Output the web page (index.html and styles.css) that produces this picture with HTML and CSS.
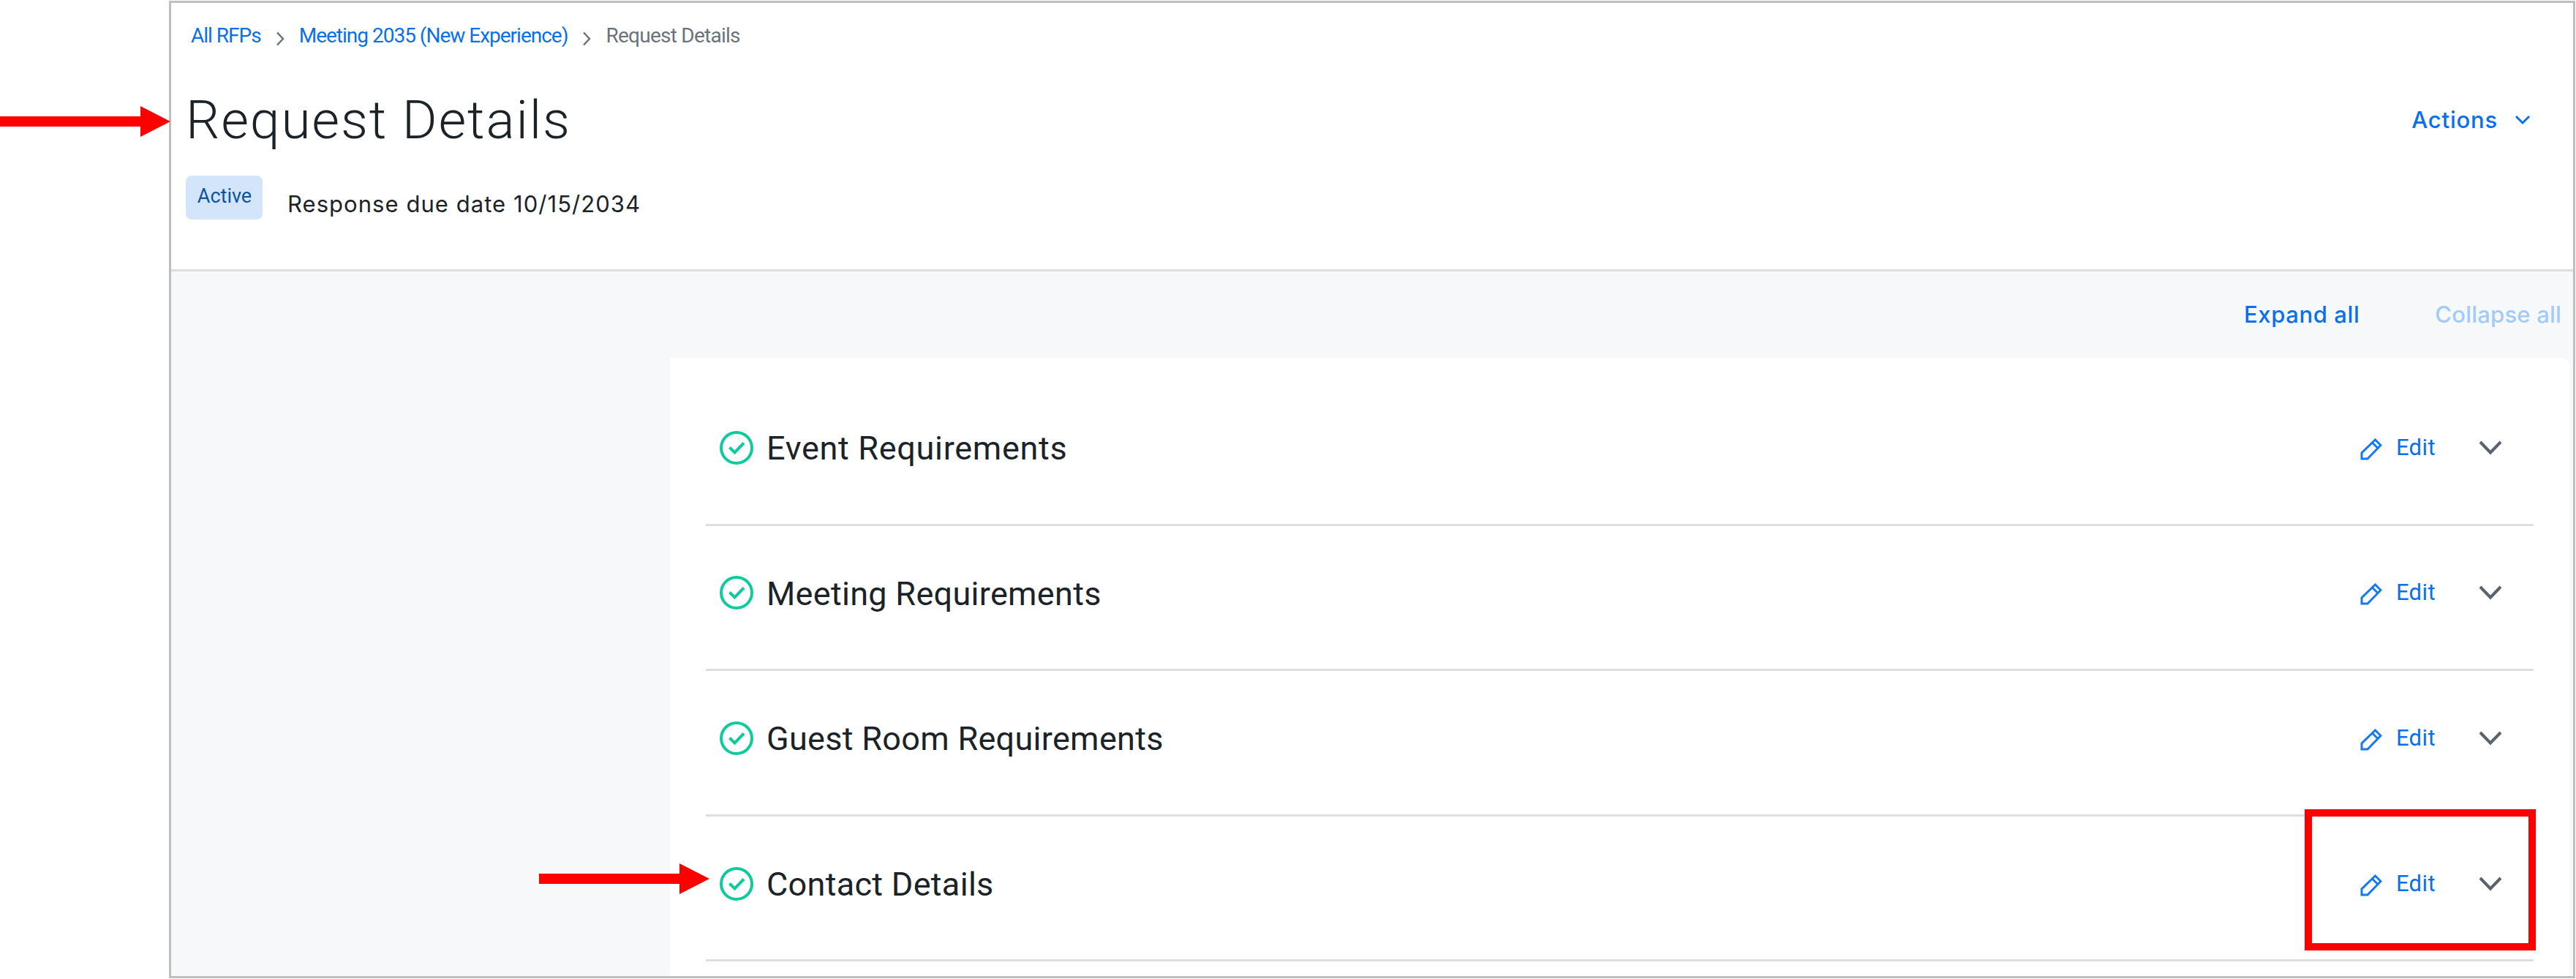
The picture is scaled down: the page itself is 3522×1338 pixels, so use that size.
FILE: index.html
```
<!DOCTYPE html>
<html lang="en">
<head>
<meta charset="utf-8">
    <title>Request Details</title>
    <link rel="stylesheet" href="styles.css">
</head>
<body>
    <svg class="arrow arrow-title" viewBox="0 0 233 42"><path d="M0 14H192V0L233 21L192 42V28H0Z"/></svg>

    <div class="frame">
        <header class="header">
            <nav class="breadcrumb">
                <a href="#">All RFPs</a>
                <svg class="sep" viewBox="0 0 12 20"><path d="M2 1.5L10 10L2 18.5"/></svg>
                <a href="#">Meeting 2035 (New Experience)</a>
                <svg class="sep" viewBox="0 0 12 20"><path d="M2 1.5L10 10L2 18.5"/></svg>
                <span class="current">Request Details</span>
            </nav>
            <div class="title-row">
                <h1>Request Details</h1>
                <button class="link actions">Actions
                    <svg class="caret" viewBox="0 0 22 14"><path d="M2 2L11 11L20 2"/></svg>
                </button>
            </div>
            <div class="status">
                <span class="badge">Active</span>
                <span class="due">Response due date 10/15/2034</span>
            </div>
        </header>

        <main class="content">
            <div class="toolbar">
                <button class="link">Expand all</button>
                <button class="link collapse" disabled>Collapse all</button>
            </div>
            <ul class="card">
                <li class="row">
                    <svg class="check" viewBox="0 0 46 46"><circle cx="23" cy="23" r="21"/><path d="M13.5 22.5L20.5 29.5L33 16.5"/></svg>
                    <h2 class="event">Event Requirements</h2>
                    <svg class="pencil" viewBox="0 0 30 30"><path d="M2 28V20L20.5 2L28 9.5L10 28ZM16.5 6L24 13.5"/></svg>
                    <a href="#" class="edit">Edit</a>
                    <svg class="chevron" viewBox="0 0 32 20"><path d="M2 2L16 16.5L30 2"/></svg>
                </li>
                <li class="row">
                    <svg class="check" viewBox="0 0 46 46"><circle cx="23" cy="23" r="21"/><path d="M13.5 22.5L20.5 29.5L33 16.5"/></svg>
                    <h2>Meeting Requirements</h2>
                    <svg class="pencil" viewBox="0 0 30 30"><path d="M2 28V20L20.5 2L28 9.5L10 28ZM16.5 6L24 13.5"/></svg>
                    <a href="#" class="edit">Edit</a>
                    <svg class="chevron" viewBox="0 0 32 20"><path d="M2 2L16 16.5L30 2"/></svg>
                </li>
                <li class="row">
                    <svg class="check" viewBox="0 0 46 46"><circle cx="23" cy="23" r="21"/><path d="M13.5 22.5L20.5 29.5L33 16.5"/></svg>
                    <h2>Guest Room Requirements</h2>
                    <svg class="pencil" viewBox="0 0 30 30"><path d="M2 28V20L20.5 2L28 9.5L10 28ZM16.5 6L24 13.5"/></svg>
                    <a href="#" class="edit">Edit</a>
                    <svg class="chevron" viewBox="0 0 32 20"><path d="M2 2L16 16.5L30 2"/></svg>
                </li>
                <li class="row">
                    <svg class="check" viewBox="0 0 46 46"><circle cx="23" cy="23" r="21"/><path d="M13.5 22.5L20.5 29.5L33 16.5"/></svg>
                    <h2>Contact Details</h2>
                    <svg class="pencil" viewBox="0 0 30 30"><path d="M2 28V20L20.5 2L28 9.5L10 28ZM16.5 6L24 13.5"/></svg>
                    <a href="#" class="edit">Edit</a>
                    <svg class="chevron" viewBox="0 0 32 20"><path d="M2 2L16 16.5L30 2"/></svg>
                </li>
            </ul>
        </main>
    </div>

    <!-- callouts -->
    <svg class="arrow arrow-contact" viewBox="0 0 233 42"><path d="M0 14H192V0L233 21L192 42V28H0Z"/></svg>
    <div class="highlight"></div>
</body>
</html>
```
FILE: styles.css
```
* {
    box-sizing: border-box;
}
body {
    margin: 0;
    position: relative;
    width: 3522px;
    height: 1338px;
    overflow: hidden;
    background: #fff;
    color: #1b2329;
    font-family: Roboto, "Liberation Sans", sans-serif;
}
svg {
    display: block;
    flex: none;
    fill: none;
}
a {
    color: #0a6fec;
    text-decoration: none;
}
h1, h2 {
    margin: 0;
    white-space: nowrap;
}
.frame {
    width: 3290px;
    height: 1336px;
    margin: 1px 0 0 231px;
    border: 3px solid #bfbfbf;
    overflow: hidden;
    display: flex;
    flex-direction: column;
}

/* header */
.header {
    height: 367px;
    flex: none;
    padding: 27px 58px 0 20px;
    border-bottom: 3px solid #dcdfe2;
}
.breadcrumb {
    display: flex;
    align-items: center;
    height: 36px;
    padding-left: 7px;
    font-size: 28px;
    line-height: 36px;
    letter-spacing: -1px;
    white-space: nowrap;
}
.sep {
    width: 12px;
    height: 20px;
    margin: 7px 20px 0 20px;
    stroke: #6a737b;
    stroke-width: 2.5;
}
.current {
    color: #6a737b;
    letter-spacing: -0.75px;
}
.title-row {
    display: flex;
    justify-content: space-between;
    height: 100px;
    margin-top: 47px;
}
h1 {
    font-size: 73px;
    font-weight: 300;
    line-height: 100px;
    letter-spacing: 1.85px;
}
.link {
    padding: 0;
    border: 0;
    background: none;
    color: #0a6fec;
    font-family: Inter, Roboto, sans-serif;
    font-size: 31px;
    font-weight: 500;
    line-height: 40px;
    letter-spacing: 0.6px;
    white-space: nowrap;
}
.actions {
    display: flex;
    align-items: center;
    letter-spacing: 0.8px;
}
.caret {
    width: 22px;
    height: 14px;
    margin-left: 23px;
    stroke: #0a6fec;
    stroke-width: 3;
}
.status {
    display: flex;
    height: 60px;
    margin-top: 26px;
}
.badge {
    width: 105px;
    height: 60px;
    padding-left: 1px;
    border-radius: 8px;
    background: #d3e5fb;
    color: #11529f;
    font-size: 27px;
    line-height: 56px;
    text-align: center;
}
.due {
    margin-left: 34px;
    font-family: Inter, Roboto, sans-serif;
    font-size: 31px;
    line-height: 78px;
    letter-spacing: 1.05px;
    white-space: nowrap;
}

/* content */
.content {
    flex: 1;
    background: #f6f8fa;
}
.toolbar {
    display: flex;
    justify-content: flex-end;
    align-items: center;
    height: 117px;
    padding-right: 16px;
    gap: 103px;
}
.collapse {
    color: #a3cbf8;
    letter-spacing: 0.2px;
}
.card {
    width: 2597px;
    height: 860px;
    margin: 1px 0 0 682px;
    padding: 31px 49px 0 49px;
    border-radius: 0 12px 0 0;
    background: #fff;
    list-style: none;
}
.row {
    display: flex;
    align-items: center;
    height: 198.6px;
    padding: 0 43px 12px 19px;
    border-bottom: 3px solid #dcdfe2;
}
.check {
    width: 46px;
    height: 46px;
    stroke: #0fcb9c;
    stroke-width: 4;
}
h2 {
    flex: 1;
    margin: 3px 0 0 18px;
    font-size: 45px;
    font-weight: 400;
    line-height: 60px;
    letter-spacing: 0.3px;
}
.event {
    letter-spacing: 0.7px;
}
.pencil {
    width: 30px;
    height: 30px;
    margin-top: 4px;
    stroke: #1479f2;
    stroke-width: 3;
}
.edit {
    margin-left: 19px;
    font-size: 31px;
    line-height: 40px;
    letter-spacing: 0.4px;
}
.chevron {
    width: 32px;
    height: 20px;
    margin-left: 59px;
    stroke: #59636d;
    stroke-width: 4;
}

/* callouts */
.arrow {
    position: absolute;
    width: 233px;
    height: 42px;
    fill: #f00;
}
.arrow-title {
    left: 0;
    top: 145px;
}
.arrow-contact {
    left: 737px;
    top: 1180px;
}
.highlight {
    position: absolute;
    left: 3151px;
    top: 1106px;
    width: 316px;
    height: 193px;
    border: 10px solid #f00;
}
```
